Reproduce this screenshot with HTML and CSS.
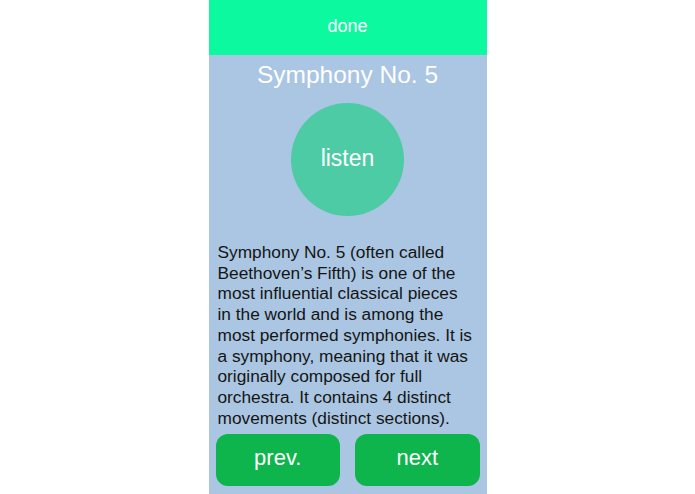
FILE: index.html
```html
<!DOCTYPE html>
<html>
<head>
<meta charset="utf-8">
<link rel="stylesheet" href="styles.css">
</head>
<body>
<div class="phone">
  <div class="topbar">done</div>
  <div class="content">
    <h1 class="title">Symphony No. 5</h1>
    <div class="listen">listen</div>
    <p class="desc">Symphony No. 5 (often called<br>Beethoven’s Fifth) is one of the<br>most influential classical pieces<br>in the world and is among the<br>most performed symphonies. It is<br>a symphony, meaning that it was<br>originally composed for full<br>orchestra. It contains 4 distinct<br>movements (distinct sections).</p>
    <div class="nav">
      <div class="btn">prev.</div>
      <div class="btn">next</div>
    </div>
  </div>
</div>
</body>
</html>
```

FILE: styles.css
```css
html, body {
  margin: 0;
  padding: 0;
  background: #ffffff;
  height: 494px;
  overflow: hidden;
}
body {
  display: flex;
  justify-content: center;
  font-family: "Liberation Sans", Arial, sans-serif;
}
.phone {
  width: 278px;
  height: 494px;
  display: flex;
  flex-direction: column;
  background: #aac6e2;
}
.topbar {
  height: 55px;
  background: #0cf9a0;
  color: #ffffff;
  font-size: 18px;
  font-weight: 300;
  display: flex;
  align-items: center;
  justify-content: center;
  padding-bottom: 2px;
  box-sizing: border-box;
}
.content {
  flex: 1;
  display: flex;
  flex-direction: column;
  align-items: center;
}
.title {
  margin: 5px 0 0 0;
  font-size: 24.5px;
  line-height: 30px;
  font-weight: normal;
  color: #ffffff;
}
.listen {
  margin-top: 13px;
  width: 113px;
  height: 113px;
  border-radius: 50%;
  background: #4ccba4;
  color: #ffffff;
  font-size: 23px;
  display: flex;
  align-items: center;
  justify-content: center;
  padding-bottom: 2px;
  box-sizing: border-box;
}
.desc {
  margin: 26px 0 0 0;
  align-self: stretch;
  padding: 0 8px 0 9px;
  font-size: 17.3px;
  line-height: 20.7px;
  color: #151515;
  white-space: nowrap;
}
.nav {
  margin-top: 6px;
  align-self: stretch;
  padding: 0 7px;
  display: flex;
  gap: 15px;
}
.btn {
  flex: 1;
  height: 52px;
  border-radius: 12px;
  background: #0eb44c;
  color: #ffffff;
  font-size: 22px;
  display: flex;
  align-items: center;
  justify-content: center;
  padding-bottom: 4px;
  box-sizing: border-box;
}
```
